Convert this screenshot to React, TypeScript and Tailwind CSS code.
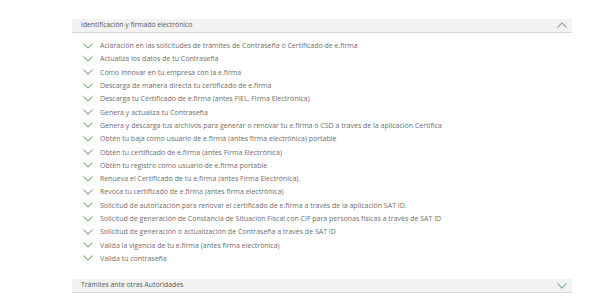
import React from "react";

const items = [
  "Aclaración en las solicitudes de trámites de Contraseña o Certificado de e.firma",
  "Actualiza los datos de tu Contraseña",
  "Cómo innovar en tu empresa con la e.firma",
  "Descarga de manera directa tu certificado de e.firma",
  "Descarga tu Certificado de e.firma (antes FIEL, Firma Electrónica)",
  "Genera y actualiza tu Contraseña",
  "Genera y descarga tus archivos para generar o renovar tu e.firma o CSD a través de la aplicación Certifica",
  "Obtén tu baja como usuario de e.firma (antes firma electrónica) portable",
  "Obtén tu certificado de e.firma (antes Firma Electrónica)",
  "Obtén tu registro como usuario de e.firma portable",
  "Renueva el Certificado de tu e.firma (antes Firma Electrónica).",
  "Revoca tu certificado de e.firma (antes firma electrónica)",
  "Solicitud de autorización para renovar el certificado de e.firma a través de la aplicación SAT ID.",
  "Solicitud de generación de Constancia de Situación Fiscal con CIF para personas físicas a través de SAT ID",
  "Solicitud de generación o actualización de Contraseña a través de SAT ID",
  "Valida la vigencia de tu e.firma (antes firma electrónica)",
  "Valida tu contraseña",
];

function Chevron({ up = false }: { up?: boolean }) {
  return (
    <svg width="10" height="6" viewBox="0 0 10 6" className="shrink-0">
      <polyline
        points={up ? "0.5,5.5 5,1 9.5,5.5" : "0.5,0.5 5,5 9.5,0.5"}
        fill="none"
        stroke="#73a573"
        strokeWidth="1.05"
      />
    </svg>
  );
}

export default function App() {
  return (
    <div
      className="w-[600px] h-[300px] bg-white pt-[18.5px] pl-[72px] overflow-hidden"
      style={{ fontFamily: '"Open Sans", sans-serif' }}
    >
      <div className="w-[500px]">
        <div className="h-[14px] bg-[#f2f2f2] border-b border-[#d8d8d8] flex items-center justify-between pl-[9px] pr-[5px]">
          <span className="text-[6.8px] text-[#5a5a5a] leading-none">Identificación y firmado electrónico</span>
          <Chevron up />
        </div>
        <div className="pt-[6.5px] pl-[11px] flex flex-col">
          {items.map((t) => (
            <div key={t} className="h-[13.3px] flex items-center gap-[7px]">
              <Chevron />
              <span className="text-[7px] text-[#6e6e6e] leading-none whitespace-nowrap">{t}</span>
            </div>
          ))}
        </div>
        <div className="mt-[14px] h-[14px] bg-[#f2f2f2] border-b border-[#d8d8d8] flex items-center justify-between pl-[9px] pr-[5px]">
          <span className="text-[6.8px] text-[#5a5a5a] leading-none">Trámites ante otras Autoridades</span>
          <Chevron />
        </div>
      </div>
    </div>
  );
}
